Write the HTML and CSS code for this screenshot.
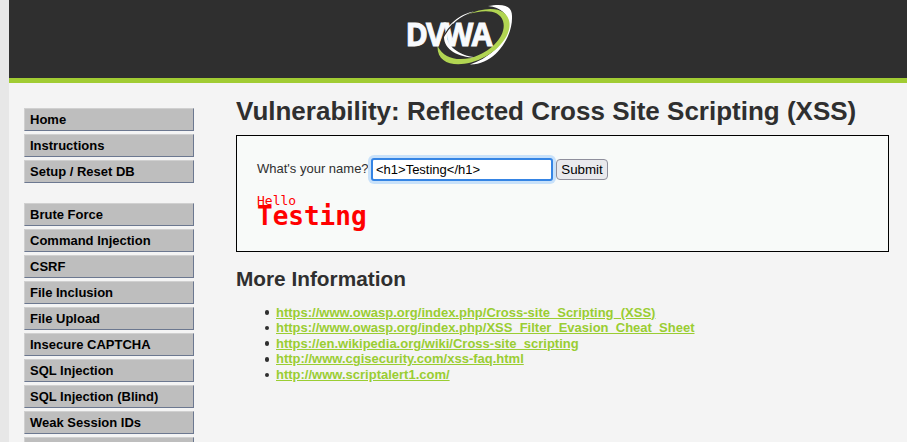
FILE: index.html
```html
<!DOCTYPE html>
<html lang="en">
<head>
<meta charset="utf-8">
<title>Vulnerability: Reflected Cross Site Scripting (XSS)</title>
<link rel="stylesheet" href="styles.css">
</head>
<body>
<div class="container">
  <header class="header">
    <svg class="logo" viewBox="0 0 110 66" role="img" aria-label="DVWA">
      <path class="white" d="M85 6C101 3 109 6 109 16C110 37 92 65 67 64.500C84 59 101 45 104 30C107 16 101 8 85 6Z"/>
      <path class="white" d="M71 11.500C56 16 47 25 44 34C43 45 55 56 74 57.500C56 58 41 50 41 37C43 25 57 14 71 11.500Z"/>
      <path class="green" d="M63 15C85 5 105 7 106.500 23C108 39 89 57 68 62.500C50 67 34 63 34.500 46C41 58 52 61 68 58C91 51 104 34 100 21C96 10 82 9 63 15Z"/>
      <text class="wordmark" x="2.500" y="46" textLength="85" lengthAdjust="spacingAndGlyphs">DVWA</text>
      <path class="gap" d="M36.500 48C38 40 43 31 50 24"/>
    </svg>
  </header>
  <div class="body">
    <nav class="menu">
      <ul>
        <li>Home</li><li>Instructions</li><li>Setup / Reset DB</li>
      </ul>
      <ul>
        <li>Brute Force</li><li>Command Injection</li><li>CSRF</li><li>File Inclusion</li><li>File Upload</li><li>Insecure CAPTCHA</li><li>SQL Injection</li><li>SQL Injection (Blind)</li><li>Weak Session IDs</li><li></li>
      </ul>
    </nav>
    <main class="main">
      <h1>Vulnerability: Reflected Cross Site Scripting (XSS)</h1>
      <section class="panel">
        <form class="form">
          <label for="name">What's your name?</label>
          <input id="name" type="text" value="&lt;h1&gt;Testing&lt;/h1&gt;">
          <button type="button">Submit</button>
        </form>
        <div class="output">Hello <strong>Testing</strong></div>
      </section>
      <h2>More Information</h2>
      <ul class="links">
        <li><a href="#">https://www.owasp.org/index.php/Cross-site_Scripting_(XSS)</a></li>
        <li><a href="#">https://www.owasp.org/index.php/XSS_Filter_Evasion_Cheat_Sheet</a></li>
        <li><a href="#">https://en.wikipedia.org/wiki/Cross-site_scripting</a></li>
        <li><a href="#">http://www.cgisecurity.com/xss-faq.html</a></li>
        <li><a href="#">http://www.scriptalert1.com/</a></li>
      </ul>
    </main>
  </div>
</div>
</body>
</html>
```
FILE: styles.css
```css
* { box-sizing: border-box; }
body {
  margin: 0;
  height: 442px;
  overflow: hidden;
  background: #e7e7e7;
  color: #2f2f2f;
  font: 13px/15.6px "Liberation Sans", Arial, sans-serif;
}
.container { margin-left: 9px; height: 442px; overflow: hidden; background: #f4f4f4; }
.header { height: 83px; background: #2f2f2f; border-bottom: 5px solid #a1cc33; }
.logo { display: block; width: 110px; height: 66px; margin-left: 394px; }
.white { fill: #fff; }
.green { fill: #b1d552; }
.gap { stroke: #2f2f2f; stroke-width: 1.2; fill: none; }
.wordmark {
  font: bold 32px "Open Sans", sans-serif;
  letter-spacing: -2px;
  fill: #f8fafd;
  stroke: #f8fafd;
  stroke-width: 0.9;
}
.body { display: flex; }
.menu { width: 170px; margin: 25px 0 0 15px; flex: none; }
.menu ul { list-style: none; margin: 0 0 20px; padding: 0; display: flex; flex-direction: column; gap: 3px; }
.menu li {
  height: 23px;
  padding-left: 5px;
  line-height: 21px;
  font-weight: bold;
  color: #000;
  background: #bebebe;
  border: 1px solid;
  border-color: #d0d0d0 #6c7890 #6c7890 #d0d0d0;
}
.main { margin-left: 42px; width: 653px; }
h1 { margin: 13px 0 9px; font-size: 26px; line-height: 30px; }
.panel { height: 117px; padding: 20px; border: 1px solid #000; background: #f8faf9; }
.form { display: flex; align-items: center; height: 27px; }
.form label { width: 114px; padding-bottom: 2px; }
.form input {
  width: 182px;
  height: 23px;
  padding: 0 3px;
  font: 13px "Liberation Sans", Arial, sans-serif;
  color: #000;
  background: #fff;
  border: 2px solid #3584e4;
  border-radius: 3px;
  outline: 0;
  box-shadow: 0 0 0 3px #c8e1fa;
}
.form button {
  width: 52px;
  height: 21px;
  margin-left: 3px;
  padding: 0;
  font: 13.33px "Liberation Sans", Arial, sans-serif;
  color: #000;
  background: #e9e9ed;
  border: 1px solid #8f8f9d;
  border-radius: 4px;
}
.output { margin-top: 10px; font: 13px/15px "DejaVu Sans Mono", monospace; color: #f00; }
.output strong { display: block; font-size: 26px; line-height: 16px; }
h2 { margin: 14px 0 0; font-size: 20.8px; line-height: 25px; }
.links { list-style: none; margin: 13.7px 0 0; padding-left: 28.5px; }
.links li { display: flex; align-items: center; }
.links li::before {
  content: "";
  width: 4.5px;
  height: 4.5px;
  margin: 0 7px 0 0;
  border-radius: 50%;
  background: #2f2f2f;
}
.links a { color: #9acd32; font-weight: bold; }
```
